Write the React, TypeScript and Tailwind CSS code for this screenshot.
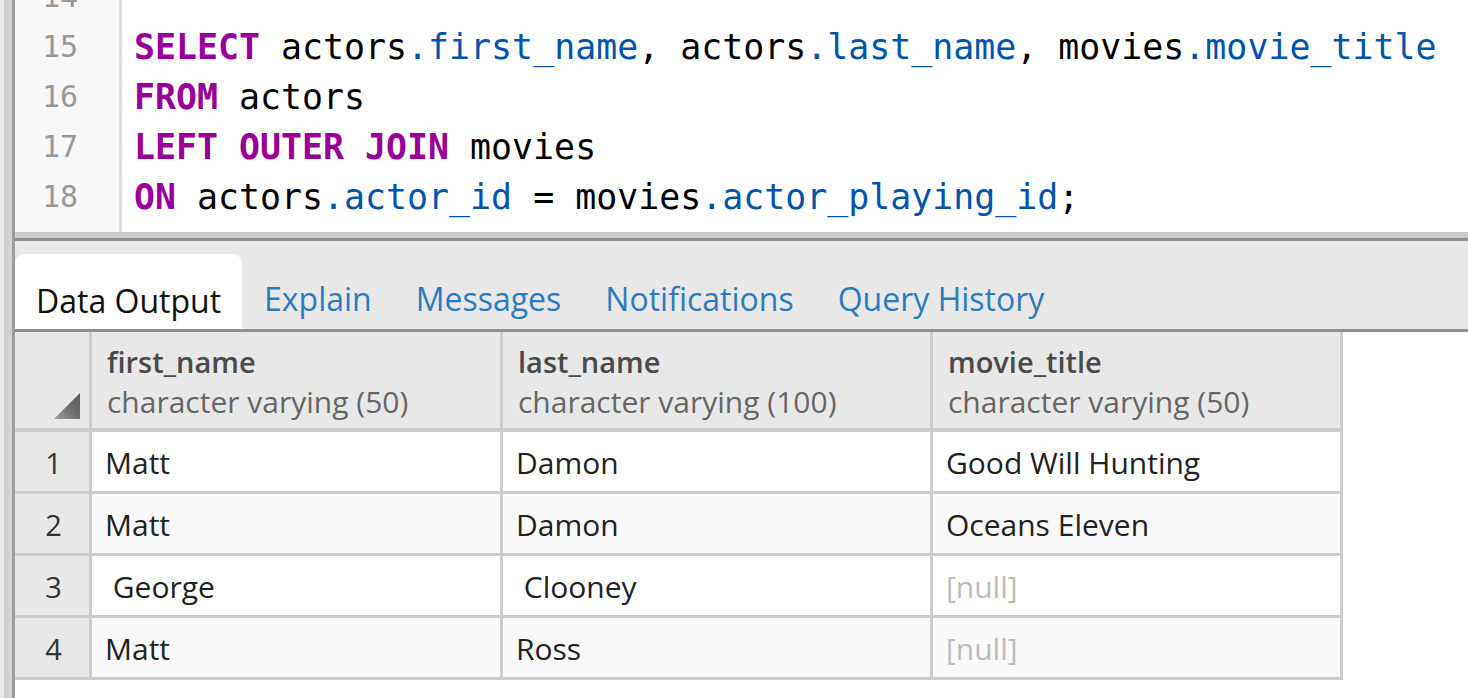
import React from "react";

type Tok = { t: string; k?: "kw" | "prop" };

const codeLines: { n: number; toks: Tok[] }[] = [
    { n: 14, toks: [] },
    {
        n: 15,
        toks: [
            { t: "SELECT", k: "kw" },
            { t: " actors" },
            { t: ".first_name", k: "prop" },
            { t: ", actors" },
            { t: ".last_name", k: "prop" },
            { t: ", movies" },
            { t: ".movie_title", k: "prop" },
        ],
    },
    { n: 16, toks: [{ t: "FROM", k: "kw" }, { t: " actors" }] },
    { n: 17, toks: [{ t: "LEFT OUTER JOIN", k: "kw" }, { t: " movies" }] },
    {
        n: 18,
        toks: [
            { t: "ON", k: "kw" },
            { t: " actors" },
            { t: ".actor_id", k: "prop" },
            { t: " = movies" },
            { t: ".actor_playing_id", k: "prop" },
            { t: ";" },
        ],
    },
];

const tabs = ["Data Output", "Explain", "Messages", "Notifications", "Query History"];

const columns = [
    { name: "first_name", type: "character varying (50)" },
    { name: "last_name", type: "character varying (100)" },
    { name: "movie_title", type: "character varying (50)" },
];

const rows: (string | null)[][] = [
    ["Matt", "Damon", "Good Will Hunting"],
    ["Matt", "Damon", "Oceans Eleven"],
    [" George", " Clooney", null],
    ["Matt", "Ross", null],
];

const mono = { fontFamily: '"DejaVu Sans Mono", "Liberation Mono", monospace' };
const sans = { fontFamily: '"Open Sans", "Noto Sans", sans-serif' };

const App = () => {
    return (
        <div className="flex h-[698px] w-full overflow-hidden bg-white" style={sans}>
            {/* left splitter strip */}
            <div className="flex h-full shrink-0">
                <div className="w-[4px] bg-[#ebebeb]" />
                <div className="w-[8px] bg-[#d2d2d2]" />
                <div className="w-[3px] bg-[#9c9c9c]" />
            </div>

            <div className="flex min-w-0 flex-1 flex-col">
                {/* editor, scrolled so line 14 is only just visible */}
                <div className="flex h-[232px] overflow-hidden">
                    <div className="w-[107px] shrink-0 border-r-[3px] border-[#dddddd] bg-[#f7f7f7]">
                        <div className="-mt-[28px]">
                            {codeLines.map((l) => (
                                <div
                                    key={l.n}
                                    className="h-[50px] pr-[41px] text-right text-[30px] leading-[50px] text-[#999999]"
                                    style={mono}
                                >
                                    {l.n}
                                </div>
                            ))}
                        </div>
                    </div>
                    <div className="min-w-0 flex-1 pl-[12px]">
                        <div className="-mt-[28px]">
                            {codeLines.map((l) => (
                                <div
                                    key={l.n}
                                    className="h-[50px] whitespace-pre text-[34.9px] leading-[50px] text-black"
                                    style={mono}
                                >
                                    {l.toks.map((tk, i) => (
                                        <span
                                            key={i}
                                            className={
                                                tk.k === "kw"
                                                    ? "font-bold text-[#990099]"
                                                    : tk.k === "prop"
                                                      ? "text-[#0055aa]"
                                                      : ""
                                            }
                                        >
                                            {tk.t}
                                        </span>
                                    ))}
                                </div>
                            ))}
                        </div>
                    </div>
                </div>
                <div className="h-[6px] shrink-0 bg-[#cccccc]" />
                <div className="h-[3px] shrink-0 bg-[#8f8f8f]" />

                {/* tabs */}
                <div className="flex h-[88px] shrink-0 items-end bg-[#e8e8e8]">
                    {tabs.map((t, i) => (
                        <div
                            key={t}
                            className={
                                i === 0
                                    ? "flex h-[75px] items-end rounded-t-[9px] bg-white px-[21px] pb-[6px] text-[32px] leading-[44px] text-[#111111]"
                                    : "flex h-[75px] items-end px-[22px] pb-[8px] text-[32px] leading-[44px] text-[#2d7bbf]"
                            }
                        >
                            {t}
                        </div>
                    ))}
                </div>
                <div className="h-[3px] shrink-0 bg-[#8f8f8f]" />

                {/* result grid */}
                <div className="grid w-fit grid-cols-[77px_411px_430px_410px]">
                    <div className="flex h-[100px] items-end justify-end border-r-[3px] border-b-[4px] border-[#cccccc] bg-[#e8e8e8] pr-[9px] pb-[9px]">
                        <svg width="26" height="26" viewBox="0 0 26 26">
                            <defs>
                                <linearGradient id="tri" x1="0" y1="1" x2="1" y2="0">
                                    <stop offset="0" stopColor="#a0a0a0" />
                                    <stop offset="0.5" stopColor="#6f6f6f" />
                                    <stop offset="1" stopColor="#5a5a5a" />
                                </linearGradient>
                            </defs>
                            <polygon points="26,0 26,26 0,26" fill="url(#tri)" />
                        </svg>
                    </div>
                    {columns.map((c) => (
                        <div
                            key={c.name}
                            className="flex h-[100px] flex-col justify-center border-r-[3px] border-b-[4px] border-[#cccccc] bg-[#e8e8e8] pl-[15px] pt-[4px]"
                        >
                            <div className="text-[29px] leading-[40px] font-semibold text-[#4a4a4a]">{c.name}</div>
                            <div className="text-[30px] leading-[40px] text-[#666666]">{c.type}</div>
                        </div>
                    ))}

                    {rows.map((r, ri) => (
                        <React.Fragment key={ri}>
                            <div className="flex h-[62px] items-center justify-center border-r-[3px] border-b-[3px] border-[#cccccc] bg-[#e8e8e8] pl-[3px] pt-[2px] text-[29px] text-[#333333]">
                                {ri + 1}
                            </div>
                            {r.map((v, ci) => (
                                <div
                                    key={ci}
                                    className={
                                        "flex h-[62px] items-center whitespace-pre border-r-[3px] border-b-[3px] border-[#cccccc] pl-[13px] pt-[2px] text-[30px] " +
                                        (ri % 2 === 1 ? "bg-[#f9f9f9] " : "bg-white ") +
                                        (v === null ? "text-[#bbbbbb]" : "text-[#222222]")
                                    }
                                >
                                    {v === null ? "[null]" : v}
                                </div>
                            ))}
                        </React.Fragment>
                    ))}
                </div>
            </div>
        </div>
    );
};

export default App;
